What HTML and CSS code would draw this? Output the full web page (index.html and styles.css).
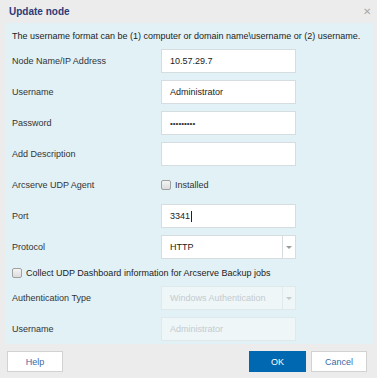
FILE: index.html
```html
<!DOCTYPE html>
<html lang="en">

  <head>
    <meta charset="UTF-8">
    <title>Update node</title>
    <link rel="stylesheet" href="styles.css">
  </head>

  <body>
    <div class="dialog">
      <div class="titlebar">
        <span class="title">Update node</span>
        <span class="close">&#x2715;</span>
      </div>
      <div class="content">
        <p class="intro">The username format can be (1) computer or domain name\username or (2) username.</p>
        <div class="row">
          <span class="label">Node Name/IP Address</span>
          <div class="field">10.57.29.7</div>
        </div>
        <div class="row">
          <span class="label">Username</span>
          <div class="field">Administrator</div>
        </div>
        <div class="row">
          <span class="label">Password</span>
          <div class="field dots">&#8226;&#8226;&#8226;&#8226;&#8226;&#8226;&#8226;&#8226;&#8226;</div>
        </div>
        <div class="row">
          <span class="label">Add Description</span>
          <div class="field"></div>
        </div>
        <div class="row">
          <span class="label">Arcserve UDP Agent</span>
          <label class="check"><span class="box"></span>Installed</label>
        </div>
        <div class="row">
          <span class="label">Port</span>
          <div class="field">3341<span class="caret"></span></div>
        </div>
        <div class="row">
          <span class="label">Protocol</span>
          <div class="field select">
            <span class="value">HTTP</span>
            <span class="arrow"></span>
          </div>
        </div>
        <label class="check collect"><span class="box"></span>Collect UDP Dashboard information for Arcserve Backup jobs</label>
        <div class="row">
          <span class="label">Authentication Type</span>
          <div class="field select disabled">
            <span class="value">Windows Authentication</span>
            <span class="arrow"></span>
          </div>
        </div>
        <div class="row">
          <span class="label">Username</span>
          <div class="field disabled">Administrator</div>
        </div>
      </div>
      <div class="footer">
        <button class="btn">Help</button>
        <span class="spacer"></span>
        <button class="btn primary">OK</button>
        <button class="btn">Cancel</button>
      </div>
    </div>
  </body>
</html>
```

FILE: styles.css
```css
body {
  margin: 0;
  font-family: "Liberation Sans", Arial, sans-serif;
  font-size: 9px;
  color: #333;
}

.dialog {
  width: 377px;
  height: 378px;
  background: #ececec;
  display: flex;
  flex-direction: column;
}

.titlebar {
  height: 23px;
  display: flex;
  align-items: center;
  justify-content: space-between;
  padding: 0 6px 0 9px;
  box-sizing: border-box;
}

.title {
  font-size: 10px;
  font-weight: bold;
  color: #2c3a78;
}

.close {
  font-size: 10px;
  color: #a8a8a8;
}

.content {
  margin: 0 4px 0 5px;
  background: #e2f1f6;
  padding: 6px 7px 3px 7px;
  display: flex;
  flex-direction: column;
  gap: 7px;
}

.intro {
  margin: 0 0 -1px;
  line-height: 14px;
  color: #222;
}

.row {
  display: flex;
  align-items: center;
  height: 24px;
}

.label {
  width: 149px;
  flex: none;
}

.field {
  width: 135px;
  height: 24px;
  box-sizing: border-box;
  background: #fff;
  border: 1px solid #d6dde0;
  padding: 0 8px;
  display: flex;
  align-items: center;
  color: #222;
}

.dots {
  font-size: 8px;
  color: #333;
}

.caret {
  display: inline-block;
  width: 1px;
  height: 11px;
  background: #222;
  margin-left: 1px;
}

.select {
  padding-right: 0;
  justify-content: space-between;
}

.select .value {
  font-weight: 500;
}

.arrow {
  width: 12px;
  height: 22px;
  border-left: 1px solid #d6dde0;
  position: relative;
}

.arrow::after {
  content: "";
  position: absolute;
  left: 3px;
  top: 10px;
  border-left: 3px solid transparent;
  border-right: 3px solid transparent;
  border-top: 3px solid #9a9a9a;
}

.disabled {
  background: #eef6f8;
  border-color: #dfe8eb;
  color: #c4cbcf;
}

.disabled .arrow {
  border-left-color: #e3eaed;
}

.disabled .arrow::after {
  border-top-color: #c4c8ca;
}

.check {
  display: flex;
  align-items: center;
  gap: 4px;
}

.box {
  width: 8px;
  height: 8px;
  border: 1px solid #a0a0a0;
  border-radius: 2px;
  background: linear-gradient(#f4f4f4, #dcdcdc);
}

.collect {
  height: 13px;
  color: #222;
}

.footer {
  flex: 1;
  display: flex;
  align-items: flex-start;
  padding: 7px 10px 0 7px;
  gap: 5px;
}

.spacer {
  flex: 1;
}

.btn {
  width: 56px;
  height: 21px;
  border: 1px solid #d2d2d2;
  background: #fff;
  color: #3b6aa6;
  font-family: inherit;
  font-size: 9px;
  padding: 0;
}

.primary {
  width: 57px;
  background: #0068b0;
  border-color: #0068b0;
  color: #fff;
}
```
